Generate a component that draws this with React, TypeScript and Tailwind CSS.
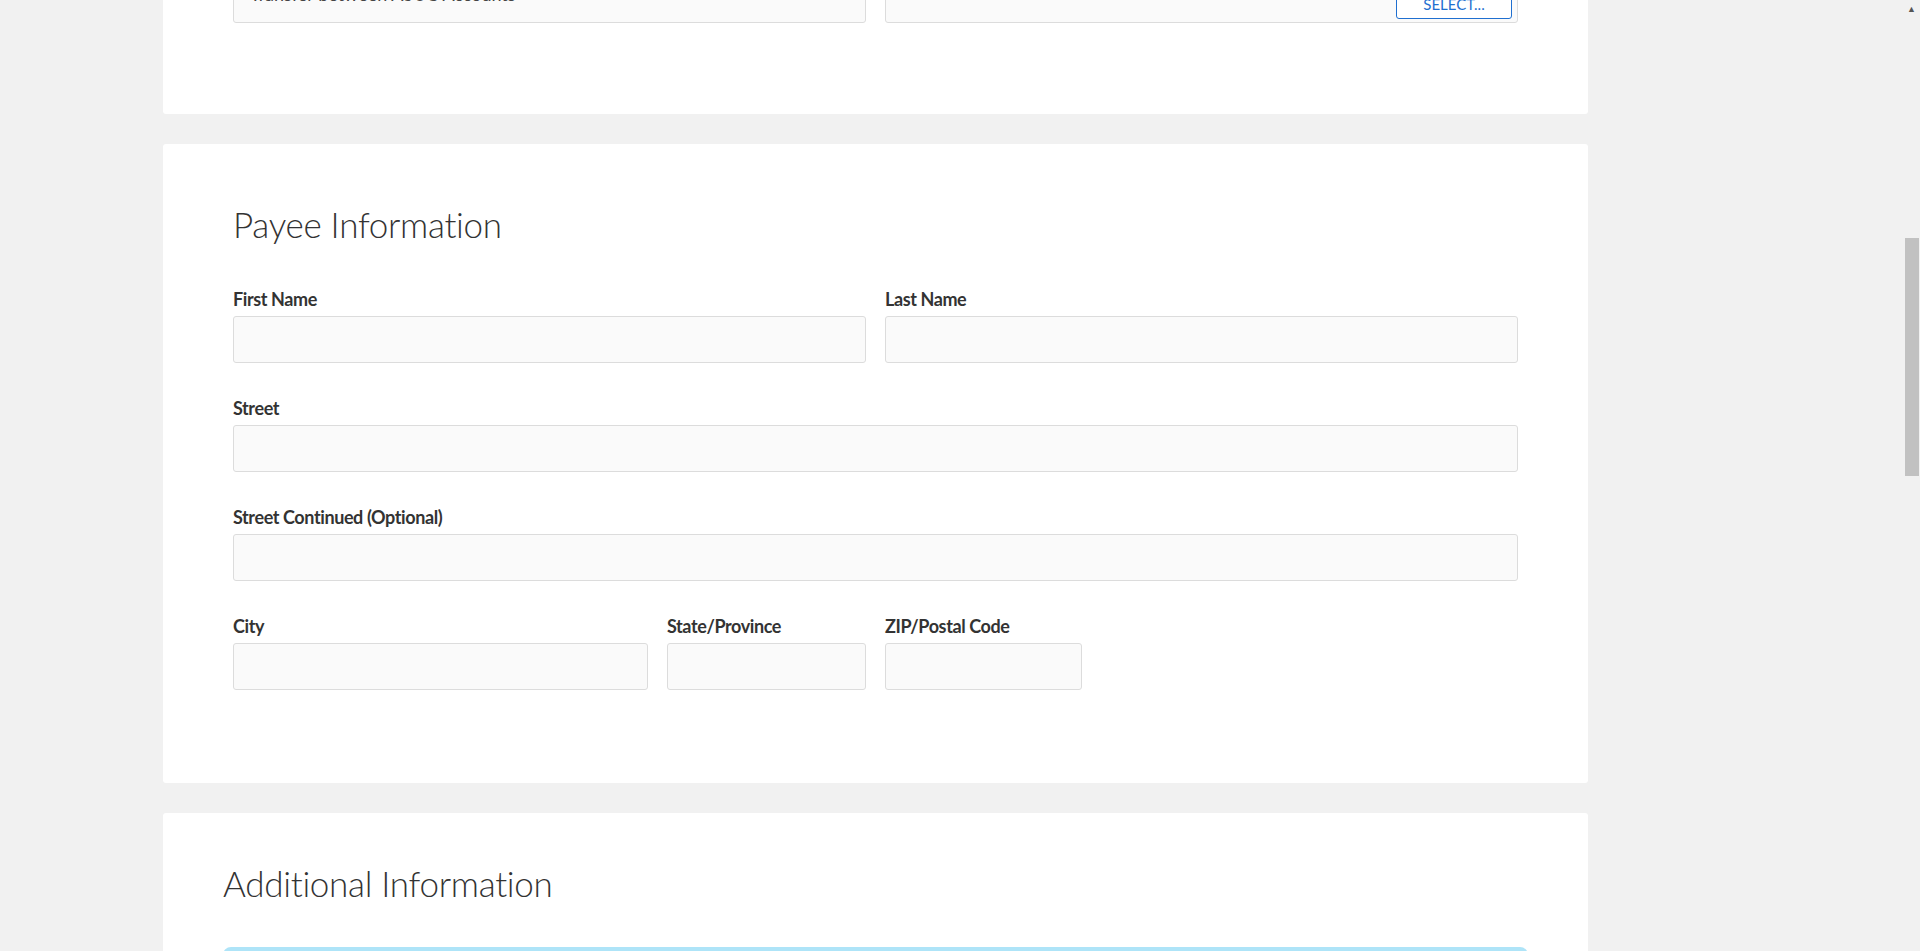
import React from "react";

const input = "h-[47px] rounded-[3px] border border-[#dcdcdc] bg-[#fafafa]";
const label = "block h-[22px] leading-[22px] text-[18px] font-bold text-[#333] mb-[6px] tracking-[-0.4px]";

function Field({ text, className = "" }: { text: string; className?: string }) {
  return (
    <div className={className}>
      <label className={label}>{text}</label>
      <div className={input} />
    </div>
  );
}

export default function App() {
  return (
    <div className="h-[951px] overflow-hidden bg-[#f1f1f1] flex" style={{ fontFamily: "Lato, 'Open Sans', sans-serif" }}>
      <div className="flex-1 pl-[163px]">
        <div className="w-[1425px] flex flex-col gap-[30px]">
          {/* top card */}
          <div className="bg-white rounded-b-[3px] px-[70px] pb-[91px] -mt-[24px]">
            <div className="grid grid-cols-2 gap-x-[19px]">
              <div className={`${input} relative flex items-center px-[16px]`}>
                <span className="text-[18px] text-[#444] -mt-[10px]">Transfer between ASUC Accounts</span>
                <span className="absolute right-[10px] top-[14px] text-[8px] text-[#555]">▼</span>
              </div>
              <div className={`${input} relative`}>
                <button className="absolute right-[5px] bottom-[3px] w-[116px] h-[34px] border border-[#1f6fd0] rounded-[3px] bg-white text-[#1f6fd0] text-[15px] pt-[4px]">
                  SELECT...
                </button>
              </div>
            </div>
          </div>
          {/* payee */}
          <div className="bg-white rounded-[3px] px-[70px] pt-[60px] pb-[93px]">
            <h2 className="text-[35px] leading-[40px] font-light text-[#333] tracking-[-0.3px]">Payee Information</h2>
            <div className="mt-[44px] flex flex-col gap-[34px]">
              <div className="grid grid-cols-2 gap-x-[19px]">
                <Field text="First Name" />
                <Field text="Last Name" />
              </div>
              <Field text="Street" />
              <Field text="Street Continued (Optional)" />
              <div className="flex gap-x-[19px]">
                <Field text="City" className="w-[415px]" />
                <Field text="State/Province" className="w-[199px]" />
                <Field text="ZIP/Postal Code" className="w-[197px]" />
              </div>
            </div>
          </div>
          {/* additional */}
          <div className="bg-white rounded-t-[3px] px-[60px] pt-[48px] h-[300px]">
            <h2 className="text-[35px] leading-[44px] font-light text-[#333] tracking-[-0.3px]">Additional Information</h2>
            <div className="mt-[42px] h-[60px] w-[1305px] rounded-[8px] bg-[#aee4f8]" />
          </div>
        </div>
      </div>
      {/* scrollbar */}
      <div className="w-[17px] bg-[#f1f1f1] relative flex flex-col items-center">
        <span className="text-[9px] text-[#555] mt-[4px] leading-none">▲</span>
        <div className="absolute left-[2px] top-[238px] w-[14px] h-[238px] bg-[#c1c1c1]" />
      </div>
    </div>
  );
}
